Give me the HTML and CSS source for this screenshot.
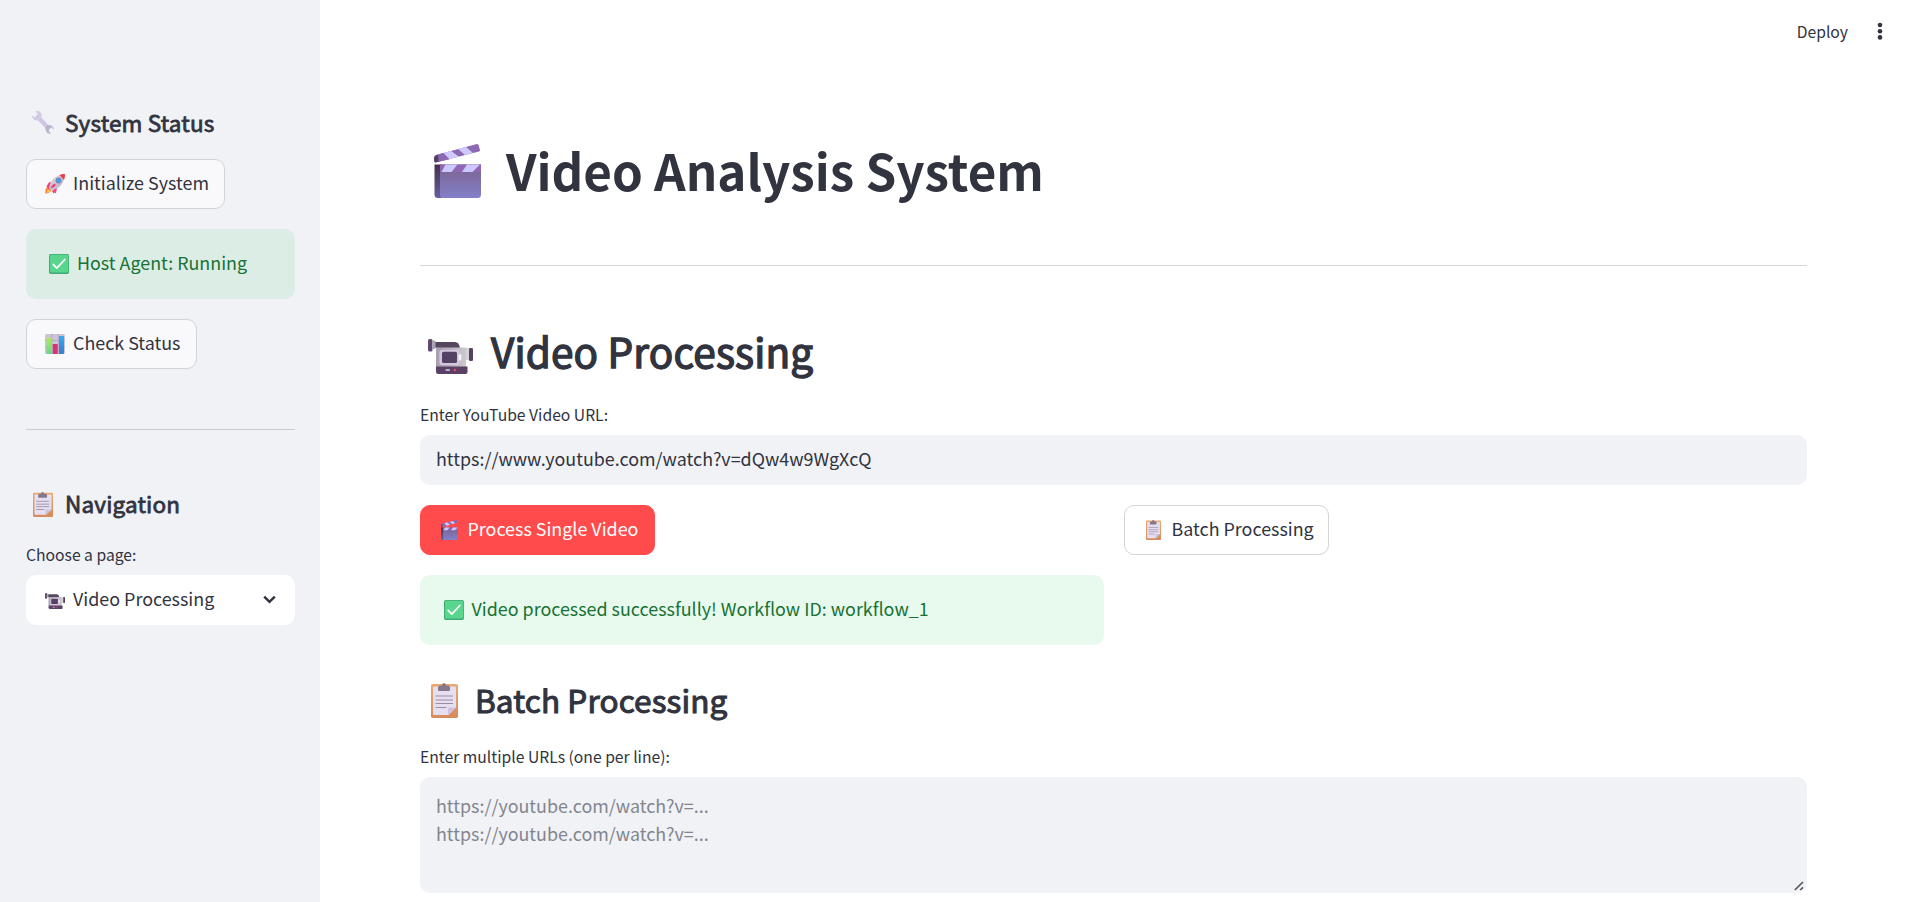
FILE: index.html
```html
<!DOCTYPE html>
<html lang="en">
<head>
<meta charset="utf-8">
<title>Video Analysis System</title>
<link rel="stylesheet" href="styles.css">
</head>
<body>
<svg class="defs" aria-hidden="true">
  <defs>
    <linearGradient id="g-body" x1="0" y1="0" x2="0" y2="1"><stop offset="0" stop-color="#7b628c"/><stop offset="1" stop-color="#8380cb"/></linearGradient>
    <linearGradient id="g-side" x1="0" y1="0" x2="0" y2="1"><stop offset="0" stop-color="#41334c"/><stop offset="1" stop-color="#6a5c9c"/></linearGradient>
    <linearGradient id="g-board" x1="0" y1="0" x2="0" y2="1"><stop offset="0" stop-color="#eda872"/><stop offset="1" stop-color="#d58b5a"/></linearGradient>
    <linearGradient id="g-cam" x1="0" y1="0" x2="1" y2="0"><stop offset="0" stop-color="#a79fb0"/><stop offset="1" stop-color="#cbc8cf"/></linearGradient>
    <linearGradient id="g-green" x1="0" y1="0" x2="0" y2="1"><stop offset="0" stop-color="#b3ea5c"/><stop offset="1" stop-color="#5fd98a"/></linearGradient>
    <linearGradient id="g-blue" x1="0" y1="0" x2="0" y2="1"><stop offset="0" stop-color="#32abf2"/><stop offset="1" stop-color="#3d7bd0"/></linearGradient>
    <linearGradient id="g-rocket" x1="0" y1="0" x2="1" y2="1"><stop offset="0" stop-color="#e2dde8"/><stop offset="1" stop-color="#b6a8bd"/></linearGradient>
  </defs>
  <symbol id="clapper" viewBox="0 0 47 54" preserveAspectRatio="none">
    <path d="M0 14q0-2 2-3L42 .2q2-.4 2.600 1L46 6q.2 1-1 1.400L1.500 18.500Q0 18.500 0 14Z" fill="#8c69b2"/>
    <path d="M0 14q0-2 4-3.500L5 17.500 1.500 18.500Q0 18.500 0 14Z" fill="#544062"/>
    <path d="m4.500 16.800 4.500-7.600 1-.3 7 5.800-5 1.300ZM10 8.900l7-1.900 7.500 5.600-7.500 2.100ZM24 5.100l8-2.200 7 6-8 2.200Z" fill="#cfcbff"/>
    <path d="m4.500 10.300 5-1.300 6 6.300-10.500 2.500Z" fill="#8c69b2"/>
    <path d="m10 8.900 7-1.900 7.500 5.700-8 2.100Z" fill="#cfcbff"/>
    <path d="M.5 20.500H8V54H4Q.5 54 .5 50.500Z" fill="url(#g-side)"/>
    <path d="M6 20.500H47V50.500Q47 54 43.500 54H9Q6 54 6 51Z" fill="url(#g-body)"/>
    <path d="M6 20.500H47v7.500H6Z" fill="#9066b5"/>
    <path d="M11.500 20.500h12L17.500 28H7.500ZM33 20.500H46L38.500 28H28Z" fill="#cbc9ff"/>
  </symbol>
  <symbol id="camera" viewBox="0 0 45 35" preserveAspectRatio="none">
    <path d="M7 3H27q4 0 5 6H12L6 8.500Z" fill="#56475f"/>
    <rect width="4.500" height="12.500" rx="1.500" fill="#5e4a6c"/>
    <path d="M4 1.500H6.500q1 0 1 1v6.500q0 1-1 1H4Z" fill="#aaa3b3"/>
    <path d="M8 10Q8 8.500 10 8.500H38V28H8Z" fill="url(#g-cam)"/>
    <rect x="38" y="9" width="4" height="12" fill="#d5d2d8"/>
    <rect x="41" y="9" width="4" height="13" rx="1.300" fill="#56445f"/>
    <rect x="11.500" y="11" width="20" height="15" rx="2" fill="#d5c5df"/>
    <rect x="14" y="12.700" width="15" height="11.300" rx="1.500" fill="#544264"/>
    <rect x="30.500" y="15" width="3" height="6.500" rx="1.500" fill="#f4f0f7"/>
    <path d="M8 27.500H39.500V33q0 2-2 2H10.500q-2.500 0-2.500-2.500Z" fill="#594064"/>
    <rect x="17.500" y="30" width="4.500" height="2" rx=".8" fill="#bfb2c8"/>
    <circle cx="27" cy="31" r="1.300" fill="#f23f68"/>
  </symbol>
  <symbol id="clipboard" viewBox="0 0 27 35" preserveAspectRatio="none">
    <rect y="1" width="27" height="34" rx="1.800" fill="url(#g-board)"/>
    <path d="M2 4.500Q2 3.500 3 3.500H24q1 0 1 1V24.500L17.500 32H3.200Q2 32 2 31Z" fill="#e5dff1"/>
    <path d="M25 24.500H18.500q-1.500 0-1.500 1.500v6Z" fill="#cec3df"/>
    <path d="M7 7V4.500Q7 2.500 9.500 2.500H11Q11 0 13 0t2 2.500h1.700Q19 2.500 19 4.500V7q0 1-1 1H8Q7 8 7 7Z" fill="#85788b"/>
    <path d="M4.500 13H22M4.500 17H22M4.500 20.500H22M4.500 24.500H15.500" stroke="#9b8da6" stroke-width="1.200"/>
  </symbol>
  <symbol id="check" viewBox="0 0 20 20">
    <rect width="20" height="20" rx="1.700" fill="#3faa72"/>
    <rect x="1" y=".8" width="18.300" height="17.600" rx="1.200" fill="#59d68d"/>
    <path d="m4.200 10.300 3.600 3.900 8-8.700" fill="none" stroke="#fff" stroke-width="1.700" stroke-linecap="round" stroke-linejoin="round"/>
  </symbol>
  <symbol id="chart" viewBox="0 0 20 20">
    <rect width="20" height="20" rx="1.500" fill="#ccc5d5"/>
    <path d="M0 6.500H20M0 13H20M6.700 0V20M13.300 0V20" stroke="#a99fb5" stroke-width=".7"/>
    <path d="M1.500 4H6.500V20H2.500Q1.500 20 1.500 19Z" fill="url(#g-green)"/>
    <rect x="7.700" y="10" width="5" height="10" fill="#d63376"/>
    <path d="M14 2H19V19q0 1-1 1H14Z" fill="url(#g-blue)"/>
  </symbol>
  <symbol id="wrench" viewBox="0 0 22 23">
    <path d="M4.500 4.500 17.500 18.500" stroke="#d0c3e3" stroke-width="4.200"/>
    <path d="M.3 4.500 3.800 7 6 5.800 6.200 3.500 3.500.3Q8.500-.8 9.600 3.500q.3 2-.8 3.800L7.300 9Q4.500 10 2 8.500-.2 7 .3 4.500Z" fill="#d3cbdf"/>
    <path d="M14.200 15.300Q17.500 13 20 15q1.700 1.500 2 3.500L19.500 16.500 17.300 17.300l-.5 2.500L19 22.700Q15.300 23.300 13.800 20q-.7-2.500.4-4.700Z" fill="#bcb2cc"/>
  </symbol>
  <symbol id="rocket" viewBox="0 0 20 20">
    <path d="M1 14q3-2 5 0 1.500 2-.8 4Q3.500 19.500.2 19.500 0 16 1 14Z" fill="#fb8b3c"/>
    <path d="M2 17q1.500-2 3-.8T2.500 19Z" fill="#ffc15a"/>
    <path d="M7 8 4 8.200 1.500 12.500 3.500 15 7 12ZM12 13 11.500 16 8.500 19.500 7 17Z" fill="#f43e78"/>
    <path d="M15.500.8 19.300 4.500Q18 10 12.500 14.300L6.200 16.200 4 13.800 6 7.500Q10 2.500 15.500.8Z" fill="url(#g-rocket)"/>
    <path d="M14.500 1Q17.500-.2 20 .2 20.200 3 19 5.800Z" fill="#ee3b4d"/>
    <circle cx="13.500" cy="6.500" r="2.900" fill="#8a8194"/><circle cx="13.500" cy="6.500" r="2.200" fill="#3da2f5"/>
    <path d="M9.500 9.500Q7 11 5.500 14.500 9 13.800 10.800 11Z" fill="#ef346d"/>
    <path d="M9 15 11.500 16 11 19.500 8.700 18Z" fill="#f34b83"/>
  </symbol>
</svg>

<div class="app">
  <aside class="sidebar">
    <h3 class="side-title status-title"><svg class="icon i-wrench"><use href="#wrench"/></svg><span>System Status</span></h3>
    <button class="btn init"><svg class="icon i-20"><use href="#rocket"/></svg><span>Initialize System</span></button>
    <div class="alert side-alert"><svg class="icon i-20"><use href="#check"/></svg><span>Host Agent: Running</span></div>
    <button class="btn status"><svg class="icon i-20"><use href="#chart"/></svg><span>Check Status</span></button>
    <hr class="rule side-rule">
    <h3 class="side-title nav-title"><svg class="icon i-clip-s"><use href="#clipboard"/></svg><span>Navigation</span></h3>
    <div class="label page-label"><span>Choose a page:</span></div>
    <div class="select"><svg class="icon i-cam-s"><use href="#camera"/></svg><span>Video Processing</span><svg class="chevron" viewBox="0 0 13 9"><path d="m1.200 1.700 5.300 5.100 5.300-5.100" fill="none" stroke="#31333f" stroke-width="2.500"/></svg></div>
  </aside>
  <main class="main">
    <header class="toolbar"><span class="deploy">Deploy</span><svg class="dots" viewBox="0 0 6 18"><circle cx="3" cy="3" r="2.300"/><circle cx="3" cy="9.200" r="2.300"/><circle cx="3" cy="15.400" r="2.300"/></svg></header>
    <div class="content">
      <h1 class="title"><svg class="icon i-clap"><use href="#clapper"/></svg><span>Video Analysis System</span></h1>
      <hr class="rule">
      <h2 class="heading"><svg class="icon i-cam"><use href="#camera"/></svg><span>Video Processing</span></h2>
      <div class="label url-label"><span>Enter YouTube Video URL:</span></div>
      <input class="field" value="https://www.youtube.com/watch?v=dQw4w9WgXcQ">
      <div class="columns">
        <div class="column">
          <button class="btn primary"><svg class="icon i-clap-s"><use href="#clapper"/></svg><span>Process Single Video</span></button>
          <div class="alert"><svg class="icon i-20"><use href="#check"/></svg><span class="t-success">Video processed successfully! Workflow ID: workflow_1</span></div>
        </div>
        <div class="column"><button class="btn batch"><svg class="icon i-clip-b"><use href="#clipboard"/></svg><span>Batch Processing</span></button></div>
      </div>
      <h3 class="subheading"><svg class="icon i-clip"><use href="#clipboard"/></svg><span>Batch Processing</span></h3>
      <div class="label multi-label"><span>Enter multiple URLs (one per line):</span></div>
      <div class="area-wrap">
        <textarea class="area" placeholder="https://youtube.com/watch?v=...&#10;https://youtube.com/watch?v=..."></textarea>
        <svg class="grip" viewBox="0 0 10 10"><path d="M.8 9 9 1M6.200 9 9 6.300" stroke="#55565a" stroke-width="1.700"/></svg>
      </div>
    </div>
  </main>
</div>
</body>
</html>
```

FILE: styles.css
```css
* { box-sizing: border-box; }
html, body { margin: 0; height: 100%; overflow: hidden; background: #fff; }
body, button, input, textarea { font-family: "Noto Sans CJK SC", "Noto Sans", sans-serif; font-size: 17.900px; color: #31333f; }
h1, h2, h3, hr { margin: 0; }
.defs { position: absolute; width: 0; height: 0; }
.app { display: flex; height: 902px; }
.icon { display: block; flex: none; }
.i-20 { width: 20px; height: 20px; }

.sidebar { width: 320px; flex: none; background: #f0f2f6; padding: 107px 25px 0 26px; display: flex; flex-direction: column; align-items: flex-start; }
.side-title { display: flex; align-items: center; height: 32px; font-size: 22.500px; white-space: nowrap; }
.side-title, .heading, .subheading { font-weight: 400; -webkit-text-stroke: .034em #31333f; letter-spacing: .004em; }
.side-title { letter-spacing: .007em; }
.side-title span { margin-bottom: 2px; }
.i-wrench { width: 22px; height: 23px; margin: -1px 11px 0 6px; }
.i-clip-s { width: 20px; height: 25px; margin: 0 12px 0 7px; }
.status-title { margin-bottom: 20px; }

.btn { display: flex; align-items: center; height: 50px; padding: 0 0 1px 18px; border: 1px solid #d3d4d9; border-radius: 10px; background: #fff; white-space: nowrap; }
.btn span, .alert span, .select span { margin-bottom: 3px; }
.sidebar .btn { background: #f9f9fb; }
.btn .i-20 { margin-right: 8px; }
.init { width: 199px; }
.status { width: 171px; }
.primary { width: 235px; background: #ff4b4b; border-color: #ff4b4b; color: #fff; padding-left: 20px; }
.batch { width: 205px; padding-left: 21px; }
.i-clap-s { width: 17px; height: 20px; margin-right: 9.500px; }
.i-clip-b { width: 15px; height: 20px; margin-right: 11px; }

.alert { display: flex; align-items: center; width: 100%; height: 70px; padding: 0 0 1px 24px; border-radius: 10px; background: #e8f9ee; color: #177233; white-space: nowrap; }
.alert .icon { margin-right: 7.500px; }
.side-alert { margin: 20px 0; padding-left: 23px; background: #dcede6; }
.side-alert .icon { margin-right: 8px; }

.rule { width: 100%; height: 1px; border: 0; background: #d5d6d8; }
.side-rule { margin-top: 60px; background: #cbccd2; }
.nav-title { margin-top: 58px; }
.label { display: flex; align-items: center; font-size: 15.700px; white-space: nowrap; height: 35px; padding-bottom: 7px; }
.page-label { margin-top: 20px; }
.select { display: flex; align-items: center; width: 100%; height: 50px; padding: 0 19px 1px 19px; background: #fff; border-radius: 10px; white-space: nowrap; }
.i-cam-s { width: 20px; height: 16px; margin: 3px 8px 0 0; }
.chevron { width: 13px; height: 9px; margin-left: auto; }

.main { flex: 1; display: flex; flex-direction: column; padding: 0 108px 0 100px; }
.toolbar { height: 62px; margin-right: -76px; display: flex; align-items: center; justify-content: flex-end; gap: 29px; font-size: 15.700px; }
.dots { width: 6px; height: 18px; fill: #31333f; }
.content { display: flex; flex-direction: column; }
.title { display: flex; align-items: center; height: 80px; margin: 68px 0 55px; font-size: 49.350px; font-weight: 700; white-space: nowrap; line-height: 80px; }
.i-clap { width: 47px; height: 54px; margin: 2px 25px 0 14px; }
.heading { display: flex; align-items: center; height: 66px; margin-top: 55px; font-size: 40.500px; line-height: 66px; white-space: nowrap; }
.heading span { margin-bottom: 7px; }
.i-cam { width: 45px; height: 35px; margin: 4px 18px 0 8px; }
.url-label { margin-top: 13px; }
.field { height: 50px; width: 100%; border: 0; border-radius: 10px; background: #f0f2f6; padding: 0 16px 4px; outline: 0; }
.columns { display: grid; grid-template-columns: 1fr 1fr; gap: 20px; margin-top: 20px; }
.column { display: flex; flex-direction: column; gap: 20px; }
.subheading { display: flex; align-items: center; height: 50px; margin-top: 30px; font-size: 31.500px; line-height: 50px; white-space: nowrap; }
.subheading span { margin-bottom: 2px; }
.i-clip { width: 27px; height: 35px; margin: 0 17px 0 11px; }
.multi-label { margin-top: 17px; }
.area-wrap { position: relative; }
.area { width: 100%; height: 116px; border: 0; border-radius: 10px; background: #f0f2f6; padding: 14px 16px; line-height: 28px; resize: none; outline: 0; display: block; }
.area::placeholder { color: #83858d; opacity: 1; }
.grip { position: absolute; right: 3px; bottom: 2px; width: 10px; height: 10px; }
```
